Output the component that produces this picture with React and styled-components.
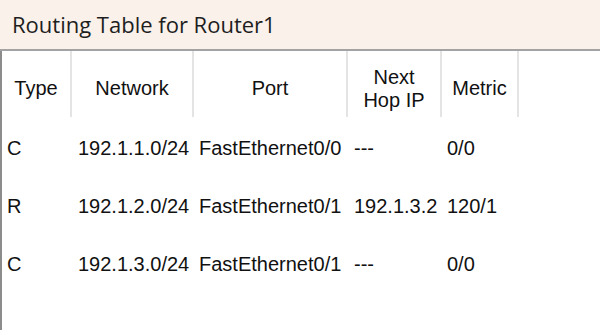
import React from "react";
import styled, { createGlobalStyle } from "styled-components";

const GlobalStyle = createGlobalStyle`
  html, body {
    margin: 0;
    padding: 0;
    background: #ffffff;
  }
  body {
    width: 600px;
    height: 330px;
    overflow: hidden;
  }
`;

const Window = styled.div`
  width: 600px;
  height: 330px;
  display: flex;
  flex-direction: column;
  background: #ffffff;
`;

const TitleBar = styled.div`
  height: 51px;
  flex: none;
  box-sizing: border-box;
  padding-left: 12px;
  padding-bottom: 2px;
  display: flex;
  align-items: center;
  background: #f9f1ea;
  border-bottom: 2px solid #a3a3a3;
  font-family: "Open Sans", "Noto Sans", sans-serif;
  font-size: 22px;
  color: #1e1e1e;
`;

const TablePane = styled.div`
  flex: 1;
  border-left: 2px solid #8c8c8c;
  background: #ffffff;
  font-family: "Liberation Sans", Arial, sans-serif;
  font-size: 20px;
  color: #111111;
`;

const Grid = styled.div`
  display: grid;
  grid-template-columns: 70px 122px 154px 94px 77px;
  grid-auto-rows: 58px;
  grid-template-rows: 66px;
`;

const HeadCell = styled.div`
  box-sizing: border-box;
  border-right: 2px solid #e4e4e4;
  display: flex;
  align-items: center;
  justify-content: center;
  text-align: center;
  line-height: 23px;
  padding-top: 9px;
`;

const Cell = styled.div`
  box-sizing: border-box;
  display: flex;
  align-items: center;
  padding-left: ${(p) => p.$pad ?? 5}px;
  white-space: nowrap;
  padding-top: 4px;
`;

const columns = [
  { key: "type", label: "Type" },
  { key: "network", label: "Network" },
  { key: "port", label: "Port" },
  { key: "next", label: <>Next<br />Hop IP</> },
  { key: "metric", label: "Metric" },
];

const routes = [
  { type: "C", network: "192.1.1.0/24", port: "FastEthernet0/0", next: "---", metric: "0/0" },
  { type: "R", network: "192.1.2.0/24", port: "FastEthernet0/1", next: "192.1.3.2", metric: "120/1" },
  { type: "C", network: "192.1.3.0/24", port: "FastEthernet0/1", next: "---", metric: "0/0" },
];

const pads = { type: 5, network: 6, port: 5, next: 6, metric: 5 };

export default function App() {
  return (
    <>
      <GlobalStyle />
      <Window>
        <TitleBar>Routing Table for Router1</TitleBar>
        <TablePane>
          <Grid>
            {columns.map((c) => (
              <HeadCell key={c.key}>{c.label}</HeadCell>
            ))}
            {routes.map((r, i) =>
              columns.map((c) => (
                <Cell key={`${i}-${c.key}`} $pad={pads[c.key]}>
                  {r[c.key]}
                </Cell>
              ))
            )}
          </Grid>
        </TablePane>
      </Window>
    </>
  );
}
